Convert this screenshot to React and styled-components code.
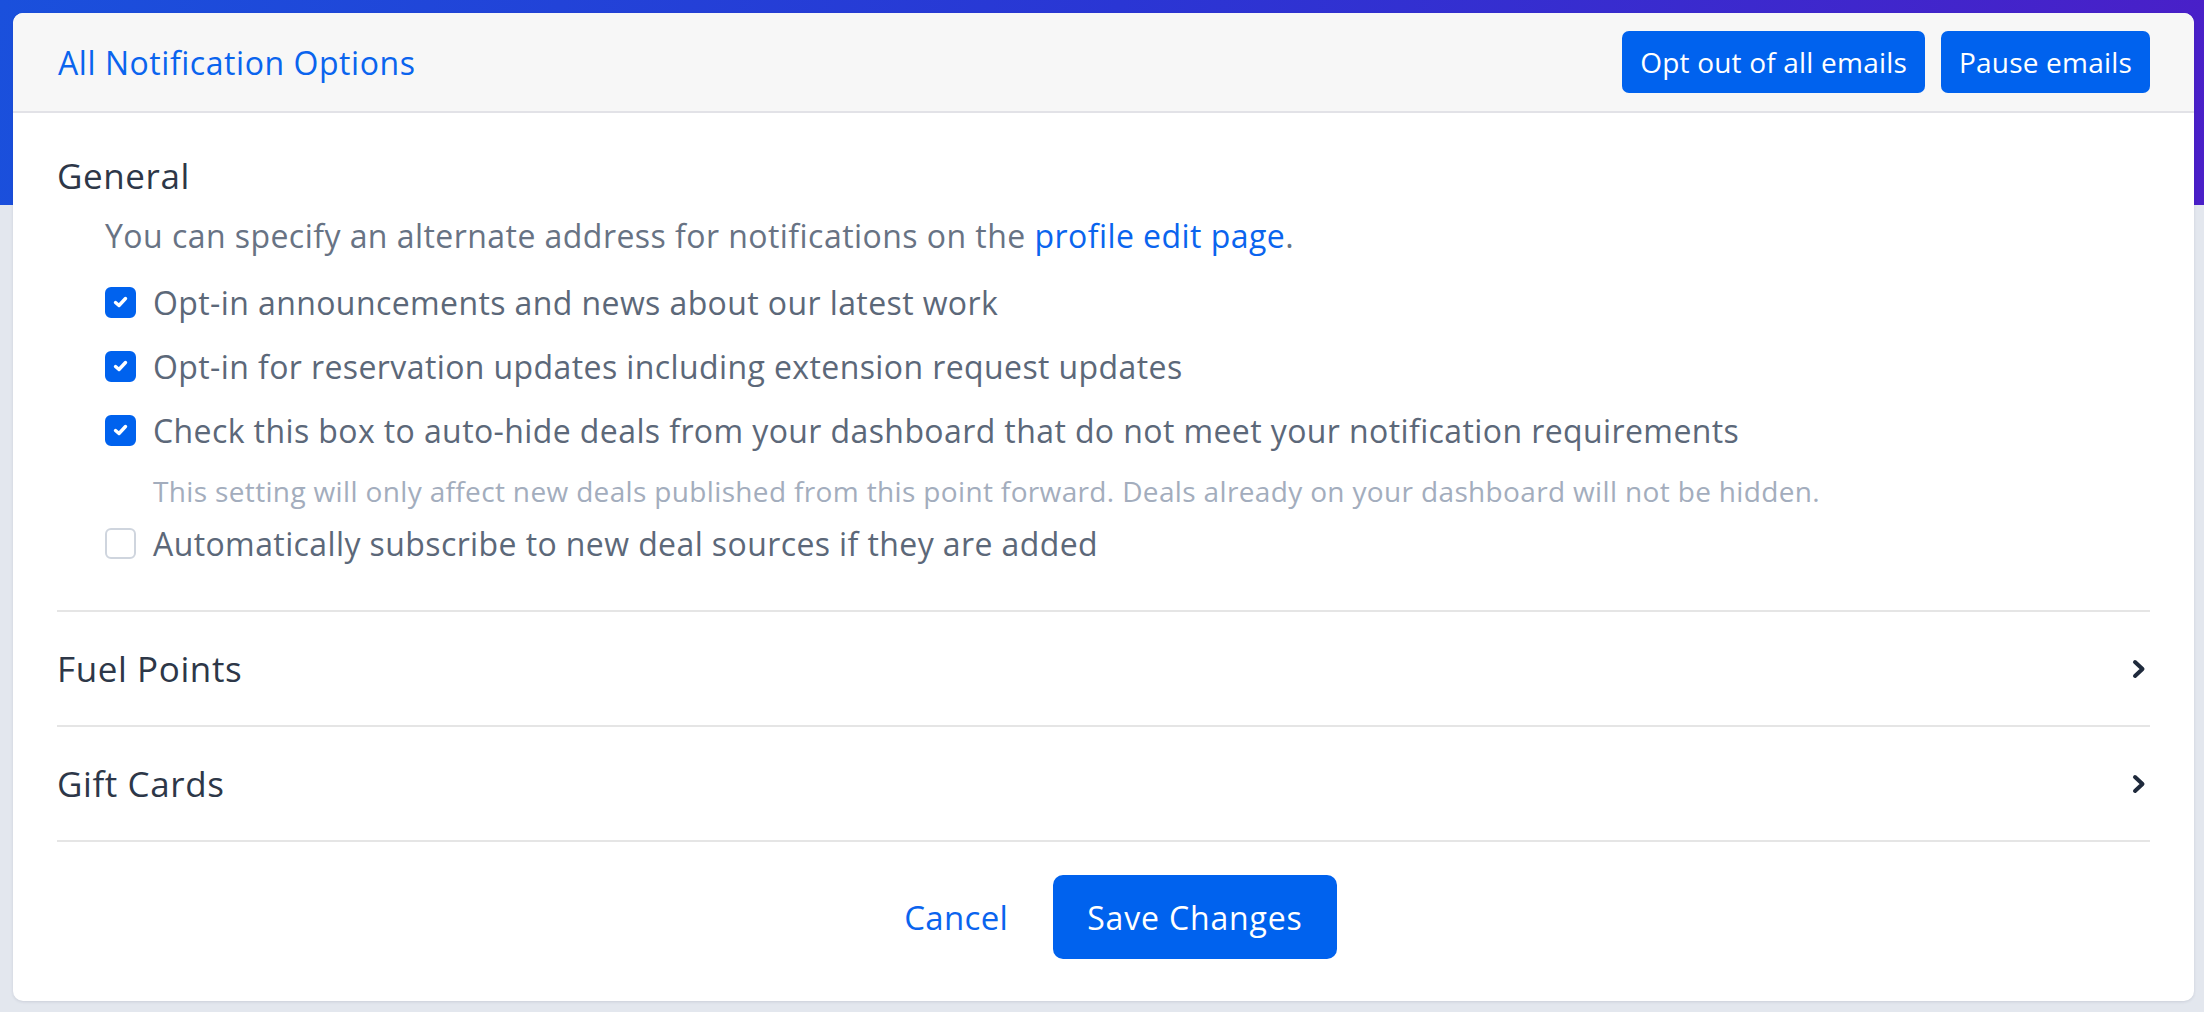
import React, { useState } from 'react';
import styled, { createGlobalStyle } from 'styled-components';

const GlobalStyle = createGlobalStyle`
  html, body {
    margin: 0;
    padding: 0;
  }
  body {
    font-family: "Open Sans", "Liberation Sans", sans-serif;
    background: #e3e7ee;
  }
`;

const Page = styled.div`
  min-height: 1012px;
  box-sizing: border-box;
  padding: 13px 10px 13px 13px;
  background:
    linear-gradient(100deg, #1a50dc 0%, #2a36d4 50%, #4a1fc8 100%) top left / 100% 205px no-repeat,
    #e3e7ee;
`;

const Card = styled.div`
  background: #fff;
  border-radius: 10px;
  overflow: hidden;
  box-shadow: 0 1px 3px rgba(30, 40, 70, 0.12);
`;

const Header = styled.div`
  height: 100px;
  box-sizing: border-box;
  display: flex;
  align-items: center;
  justify-content: space-between;
  padding: 0 44px 0 45px;
  background: #f7f7f7;
  border-bottom: 2px solid #e2e2e7;
`;

const HeaderTitle = styled.div`
  font-size: 32px;
  letter-spacing: 0.55px;
  font-weight: 500;
  color: #0a64ee;
`;

const HeaderActions = styled.div`
  display: flex;
  gap: 16px;
`;

const PrimaryButton = styled.button`
  font-family: inherit;
  height: ${p => (p.$large ? '84px' : '62px')};
  padding: 0 ${p => (p.$large ? '34px' : '18px')};
  border: none;
  border-radius: ${p => (p.$large ? '10px' : '7px')};
  background: #0062ee;
  color: #fff;
  font-size: ${p => (p.$large ? '32px' : '28px')};
  letter-spacing: ${p => (p.$large ? '0.85px' : '0.2px')};
  cursor: pointer;
`;

const Body = styled.div`
  padding: 0 44px;
`;

const Section = styled.div`
  padding: 42px 0 47px;
  border-bottom: 2px solid #e5e5e5;
`;

const SectionTitle = styled.div`
  font-size: 35px;
  letter-spacing: 0.6px;
  line-height: 41px;
  color: #2d3748;
`;

const Options = styled.div`
  padding-left: 48px;
`;

const Description = styled.p`
  margin: 20px 0 26px;
  font-size: 32px;
  letter-spacing: 0.45px;
  line-height: 40px;
  color: #687384;

  a {
    color: #0a64ee;
    text-decoration: none;
  }
`;

const OptionRow = styled.label`
  display: flex;
  align-items: center;
  gap: 17px;
  height: 40px;
  margin-top: ${p => p.$gap || 0}px;
  font-size: 32px;
  letter-spacing: 0.4px;
  color: #5c6879;
  cursor: pointer;
`;

const Box = styled.span`
  flex: none;
  width: 31px;
  height: 31px;
  box-sizing: border-box;
  border-radius: 6px;
  display: flex;
  align-items: center;
  justify-content: center;
  background: ${p => (p.$checked ? '#0062ee' : '#fff')};
  border: 2px solid ${p => (p.$checked ? '#0062ee' : '#cfd5de')};
`;

const Hint = styled.div`
  margin: 25px 0 0 48px;
  font-size: 28px;
  letter-spacing: 0.35px;
  line-height: 32px;
  color: #a3adbd;
`;

const CollapsedRow = styled.div`
  height: 115px;
  box-sizing: border-box;
  display: flex;
  align-items: center;
  justify-content: space-between;
  padding-right: 4px;
  border-bottom: 2px solid #e5e5e5;
  cursor: pointer;
`;

const Footer = styled.div`
  display: flex;
  justify-content: center;
  align-items: center;
  gap: 27px;
  padding: 33px 0 42px 16px;
`;

const LinkButton = styled.button`
  font-family: inherit;
  background: none;
  border: none;
  padding: 0 18px;
  font-size: 33px;
  letter-spacing: 0.3px;
  color: #0a64ee;
  cursor: pointer;
`;

function Check() {
  return (
    <svg width="15" height="12" viewBox="0 0 15 12">
      <path d="M2.5 6.5 L6 9.5 L12.5 2.5" fill="none" stroke="#fff" strokeWidth="3.4" strokeLinecap="round" strokeLinejoin="round" />
    </svg>
  );
}

function Chevron() {
  return (
    <svg width="14" height="20" viewBox="0 0 14 20">
      <path d="M3 3 L10.5 10 L3 17" fill="none" stroke="#1f2a3c" strokeWidth="4" strokeLinecap="round" strokeLinejoin="round" />
    </svg>
  );
}

function Option({ checked, onToggle, gap, children }) {
  return (
    <OptionRow $gap={gap} onClick={onToggle}>
      <Box $checked={checked}>{checked && <Check />}</Box>
      {children}
    </OptionRow>
  );
}

export default function App() {
  const [opts, setOpts] = useState({ news: true, reservations: true, autoHide: true, autoSubscribe: false });
  const toggle = key => () => setOpts({ ...opts, [key]: !opts[key] });

  return (
    <>
      <GlobalStyle />
      <Page>
        <Card>
          <Header>
            <HeaderTitle>All Notification Options</HeaderTitle>
            <HeaderActions>
              <PrimaryButton>Opt out of all emails</PrimaryButton>
              <PrimaryButton>Pause emails</PrimaryButton>
            </HeaderActions>
          </Header>

          <Body>
            <Section>
              <SectionTitle>General</SectionTitle>
              <Options>
                <Description>
                  You can specify an alternate address for notifications on the <a href="#profile">profile edit page</a>.
                </Description>
                <Option checked={opts.news} onToggle={toggle('news')}>
                  Opt-in announcements and news about our latest work
                </Option>
                <Option checked={opts.reservations} onToggle={toggle('reservations')} gap={24}>
                  Opt-in for reservation updates including extension request updates
                </Option>
                <Option checked={opts.autoHide} onToggle={toggle('autoHide')} gap={24}>
                  Check this box to auto-hide deals from your dashboard that do not meet your notification requirements
                </Option>
                <Hint>
                  This setting will only affect new deals published from this point forward. Deals already on your dashboard will not be hidden.
                </Hint>
                <Option checked={opts.autoSubscribe} onToggle={toggle('autoSubscribe')} gap={16}>
                  Automatically subscribe to new deal sources if they are added
                </Option>
              </Options>
            </Section>

            <CollapsedRow>
              <SectionTitle>Fuel Points</SectionTitle>
              <Chevron />
            </CollapsedRow>
            <CollapsedRow>
              <SectionTitle>Gift Cards</SectionTitle>
              <Chevron />
            </CollapsedRow>

            <Footer>
              <LinkButton>Cancel</LinkButton>
              <PrimaryButton $large>Save Changes</PrimaryButton>
            </Footer>
          </Body>
        </Card>
      </Page>
    </>
  );
}
